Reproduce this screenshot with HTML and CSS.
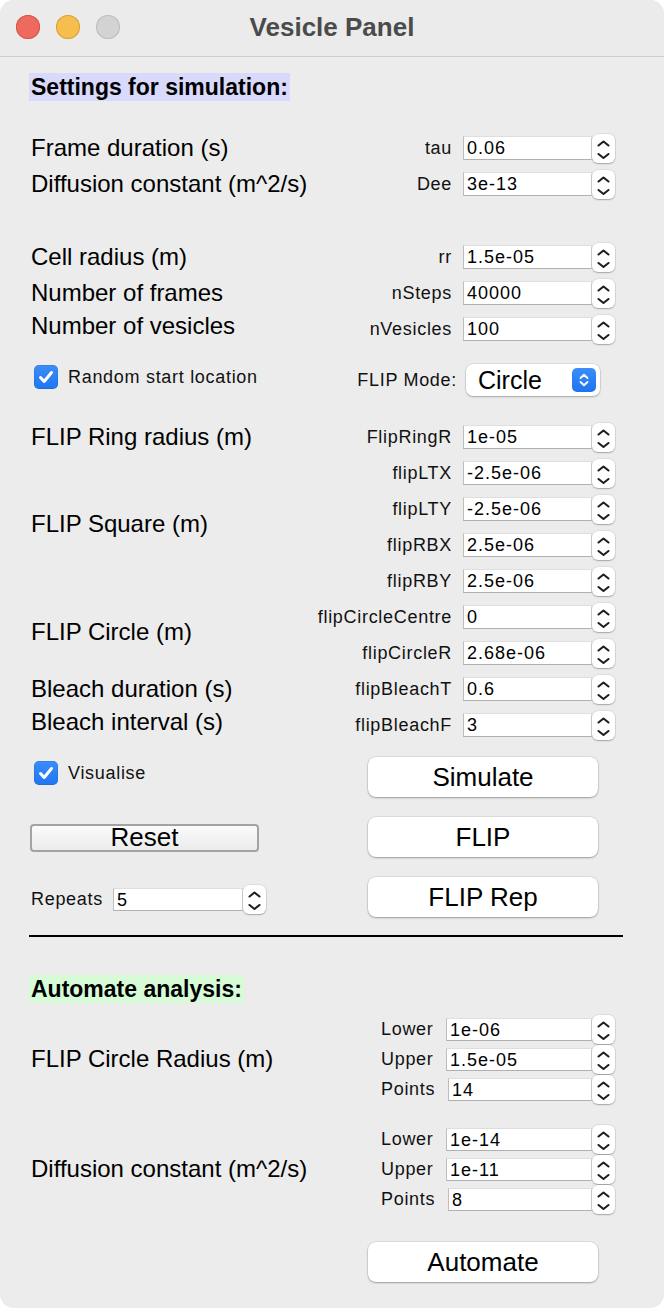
FILE: index.html
```html
<!DOCTYPE html>
<html>
<head>
<meta charset="utf-8">
<title>Vesicle Panel</title>
<link rel="stylesheet" href="styles.css">
</head>
<body>
<div class="window">
  <header class="titlebar">
    <div class="lights">
      <span class="light red"></span>
      <span class="light yellow"></span>
      <span class="light grey"></span>
    </div>
    <div class="title">Vesicle Panel</div>
    <div></div>
  </header>

  <main class="content">
    <div class="section-head sim">Settings for simulation:</div>

    <div class="form block-a">
      <div class="lbl">Frame duration (s)</div>
      <div class="rl">tau</div><div class="entry">0.06</div>
      <div class="spin"><svg width="23" height="29" viewBox="0 0 23 29"><path d="M6.5 11.5 L11.5 7.5 L16.5 11.5 M6.5 20 L11.5 24 L16.5 20"/></svg></div>
      <div class="lbl">Diffusion constant (m^2/s)</div>
      <div class="rl">Dee</div><div class="entry">3e-13</div>
      <div class="spin"><svg width="23" height="29" viewBox="0 0 23 29"><path d="M6.5 11.5 L11.5 7.5 L16.5 11.5 M6.5 20 L11.5 24 L16.5 20"/></svg></div>
    </div>

    <div class="form block-b">
      <div class="lbl">Cell radius (m)</div>
      <div class="rl">rr</div><div class="entry">1.5e-05</div>
      <div class="spin"><svg width="23" height="29" viewBox="0 0 23 29"><path d="M6.5 11.5 L11.5 7.5 L16.5 11.5 M6.5 20 L11.5 24 L16.5 20"/></svg></div>
      <div class="lbl">Number of frames</div>
      <div class="rl">nSteps</div><div class="entry">40000</div>
      <div class="spin"><svg width="23" height="29" viewBox="0 0 23 29"><path d="M6.5 11.5 L11.5 7.5 L16.5 11.5 M6.5 20 L11.5 24 L16.5 20"/></svg></div>
      <div class="lbl up">Number of vesicles</div>
      <div class="rl">nVesicles</div><div class="entry">100</div>
      <div class="spin"><svg width="23" height="29" viewBox="0 0 23 29"><path d="M6.5 11.5 L11.5 7.5 L16.5 11.5 M6.5 20 L11.5 24 L16.5 20"/></svg></div>
    </div>

    <div class="rowc">
      <label class="check">
        <span class="box"><svg width="24" height="24" viewBox="0 0 24 24"><path d="M6.5 12.5 L10.2 16.5 L17.5 7.5"/></svg></span>
        <span class="small">Random start location</span>
      </label>
      <div class="mode">
        <span class="small mode-label">FLIP Mode:</span>
        <div class="popup">
          <span class="popup-text">Circle</span>
          <span class="popup-btn"><svg width="24" height="24" viewBox="0 0 24 24"><path d="M8.5 10 L12 6.8 L15.5 10 M8.5 14 L12 17.2 L15.5 14"/></svg></span>
        </div>
      </div>
    </div>

    <div class="form block-d">
      <div class="lbl">FLIP Ring radius (m)</div>
      <div class="rl">FlipRingR</div><div class="entry">1e-05</div>
      <div class="spin"><svg width="23" height="29" viewBox="0 0 23 29"><path d="M6.5 11.5 L11.5 7.5 L16.5 11.5 M6.5 20 L11.5 24 L16.5 20"/></svg></div>

      <div class="lbl span4 up">FLIP Square (m)</div>
      <div class="rl">flipLTX</div><div class="entry">-2.5e-06</div>
      <div class="spin"><svg width="23" height="29" viewBox="0 0 23 29"><path d="M6.5 11.5 L11.5 7.5 L16.5 11.5 M6.5 20 L11.5 24 L16.5 20"/></svg></div>
      <div class="rl">flipLTY</div><div class="entry">-2.5e-06</div>
      <div class="spin"><svg width="23" height="29" viewBox="0 0 23 29"><path d="M6.5 11.5 L11.5 7.5 L16.5 11.5 M6.5 20 L11.5 24 L16.5 20"/></svg></div>
      <div class="rl">flipRBX</div><div class="entry">2.5e-06</div>
      <div class="spin"><svg width="23" height="29" viewBox="0 0 23 29"><path d="M6.5 11.5 L11.5 7.5 L16.5 11.5 M6.5 20 L11.5 24 L16.5 20"/></svg></div>
      <div class="rl">flipRBY</div><div class="entry">2.5e-06</div>
      <div class="spin"><svg width="23" height="29" viewBox="0 0 23 29"><path d="M6.5 11.5 L11.5 7.5 L16.5 11.5 M6.5 20 L11.5 24 L16.5 20"/></svg></div>

      <div class="lbl span2 up">FLIP Circle (m)</div>
      <div class="rl">flipCircleCentre</div><div class="entry">0</div>
      <div class="spin"><svg width="23" height="29" viewBox="0 0 23 29"><path d="M6.5 11.5 L11.5 7.5 L16.5 11.5 M6.5 20 L11.5 24 L16.5 20"/></svg></div>
      <div class="rl">flipCircleR</div><div class="entry">2.68e-06</div>
      <div class="spin"><svg width="23" height="29" viewBox="0 0 23 29"><path d="M6.5 11.5 L11.5 7.5 L16.5 11.5 M6.5 20 L11.5 24 L16.5 20"/></svg></div>

      <div class="lbl">Bleach duration (s)</div>
      <div class="rl">flipBleachT</div><div class="entry">0.6</div>
      <div class="spin"><svg width="23" height="29" viewBox="0 0 23 29"><path d="M6.5 11.5 L11.5 7.5 L16.5 11.5 M6.5 20 L11.5 24 L16.5 20"/></svg></div>
      <div class="lbl up">Bleach interval (s)</div>
      <div class="rl">flipBleachF</div><div class="entry">3</div>
      <div class="spin"><svg width="23" height="29" viewBox="0 0 23 29"><path d="M6.5 11.5 L11.5 7.5 L16.5 11.5 M6.5 20 L11.5 24 L16.5 20"/></svg></div>
    </div>

    <div class="bottom">
      <label class="check vis">
        <span class="box"><svg width="24" height="24" viewBox="0 0 24 24"><path d="M6.5 12.5 L10.2 16.5 L17.5 7.5"/></svg></span>
        <span class="small">Visualise</span>
      </label>
      <div class="btn">Simulate</div>
      <div class="reset-cell"><div class="btn-reset">Reset</div></div>
      <div class="btn">FLIP</div>
      <div class="repeats">
        <span class="small rep-label">Repeats</span>
        <div class="entry rep-entry">5</div>
        <div class="spin"><svg width="23" height="29" viewBox="0 0 23 29"><path d="M6.5 11.5 L11.5 7.5 L16.5 11.5 M6.5 20 L11.5 24 L16.5 20"/></svg></div>
      </div>
      <div class="btn">FLIP Rep</div>
    </div>

    <div class="separator"></div>

    <div class="section-head auto-head">Automate analysis:</div>

    <div class="auto auto-1">
      <div class="lbl span3">FLIP Circle Radius (m)</div>
      <div class="al">Lower</div><div class="entry sm">1e-06</div>
      <div class="spin"><svg width="23" height="29" viewBox="0 0 23 29"><path d="M6.5 11.5 L11.5 7.5 L16.5 11.5 M6.5 20 L11.5 24 L16.5 20"/></svg></div>
      <div class="al">Upper</div><div class="entry sm">1.5e-05</div>
      <div class="spin"><svg width="23" height="29" viewBox="0 0 23 29"><path d="M6.5 11.5 L11.5 7.5 L16.5 11.5 M6.5 20 L11.5 24 L16.5 20"/></svg></div>
      <div class="al">Points</div><div class="entry sm pts">14</div>
      <div class="spin"><svg width="23" height="29" viewBox="0 0 23 29"><path d="M6.5 11.5 L11.5 7.5 L16.5 11.5 M6.5 20 L11.5 24 L16.5 20"/></svg></div>
    </div>

    <div class="auto auto-2">
      <div class="lbl span3">Diffusion constant (m^2/s)</div>
      <div class="al">Lower</div><div class="entry sm">1e-14</div>
      <div class="spin"><svg width="23" height="29" viewBox="0 0 23 29"><path d="M6.5 11.5 L11.5 7.5 L16.5 11.5 M6.5 20 L11.5 24 L16.5 20"/></svg></div>
      <div class="al">Upper</div><div class="entry sm">1e-11</div>
      <div class="spin"><svg width="23" height="29" viewBox="0 0 23 29"><path d="M6.5 11.5 L11.5 7.5 L16.5 11.5 M6.5 20 L11.5 24 L16.5 20"/></svg></div>
      <div class="al">Points</div><div class="entry sm pts">8</div>
      <div class="spin"><svg width="23" height="29" viewBox="0 0 23 29"><path d="M6.5 11.5 L11.5 7.5 L16.5 11.5 M6.5 20 L11.5 24 L16.5 20"/></svg></div>
    </div>

    <div class="automate-row">
      <div class="btn">Automate</div>
    </div>
  </main>
</div>
</body>
</html>
```

FILE: styles.css
```css
* { box-sizing: border-box; }

html, body {
  margin: 0;
  padding: 0;
  background: #ffffff;
}

body {
  font-family: "Liberation Sans", Arial, sans-serif;
  color: #111;
}

.window {
  width: 664px;
  height: 1308px;
  background: #ececec;
  border-radius: 14px;
  overflow: hidden;
}

/* title bar */
.titlebar {
  height: 57px;
  display: grid;
  grid-template-columns: 1fr auto 1fr;
  align-items: center;
  background: #ebebeb;
  border-bottom: 1px solid #cdcdcd;
}

.lights {
  display: flex;
  gap: 16px;
  padding-left: 16px;
  padding-bottom: 2px;
}

.light {
  width: 24px;
  height: 24px;
  border-radius: 50%;
  display: block;
}

.light.red { background: #ee6a5f; box-shadow: inset 0 0 0 1px #d4564b; }
.light.yellow { background: #f5be4f; box-shadow: inset 0 0 0 1px #d9a13c; }
.light.grey { background: #d3d3d3; box-shadow: inset 0 0 0 1px #bdbdbd; }

.title {
  font-weight: bold;
  font-size: 26px;
  color: #4b4b4b;
  padding-bottom: 2px;
}

/* section headers */
.section-head {
  display: inline-block;
  font-weight: bold;
  font-size: 23px;
  height: 28px;
  line-height: 28px;
  padding: 0 2px;
  color: #000;
}

.sim {
  margin: 16px 0 0 29px;
  background: #d9d9fb;
}

.auto-head {
  margin: 38px 0 0 29px;
  background: #d6fbd6;
}

/* forms */
.form {
  display: grid;
  grid-template-columns: 1fr auto 129px 23px;
  grid-auto-rows: 36px;
  align-items: center;
  padding: 0 49px 0 31px;
}

.block-a { margin-top: 29px; }
.block-b { margin-top: 37px; }
.block-d { margin-top: 23px; }

.lbl {
  grid-column: 1;
  font-size: 24px;
  white-space: nowrap;
  color: #000;
}

.lbl.up { margin-top: -6px; }
.span2 { grid-row: span 2; }
.span3 { grid-row: span 3; }
.span4 { grid-row: span 4; }

.rl {
  grid-column: 2;
  justify-self: end;
  font-size: 18px;
  letter-spacing: 0.7px;
  margin-right: 11px;
  white-space: nowrap;
}

.entry {
  grid-column: 3;
  height: 24px;
  background: #fff;
  border: 1px solid;
  border-color: #dedede #dedede #b0b0b0 #bdbdbd;
  font-size: 18px;
  letter-spacing: 1px;
  padding-left: 3px;
  line-height: 22px;
  white-space: nowrap;
  color: #000;
}

.spin {
  grid-column: 4;
  width: 23px;
  height: 29px;
  background: #fff;
  border-radius: 6px;
  box-shadow: 0 0 0 0.5px rgba(0, 0, 0, 0.12), 0 1px 1.5px rgba(0, 0, 0, 0.25);
}

.spin svg { display: block; }
.spin path {
  fill: none;
  stroke: #1e1e1e;
  stroke-width: 2.1;
  stroke-linecap: round;
  stroke-linejoin: round;
}

.small {
  font-size: 18px;
  letter-spacing: 0.7px;
  color: #111;
}

/* checkbox row */
.rowc {
  margin-top: 17px;
  height: 32px;
  display: flex;
  justify-content: space-between;
  align-items: flex-start;
  padding: 0 64px 0 34px;
}

.check {
  display: flex;
  align-items: center;
  gap: 10px;
  margin-top: 1px;
}

.box {
  width: 24px;
  height: 24px;
  border-radius: 5px;
  background: linear-gradient(#3c8dfb, #1f76f0);
  box-shadow: inset 0 0 0 0.5px rgba(0, 0, 0, 0.15);
  display: block;
}

.box svg { display: block; }
.box path {
  fill: none;
  stroke: #fff;
  stroke-width: 3;
  stroke-linecap: round;
  stroke-linejoin: round;
}

.mode {
  display: flex;
  align-items: center;
  gap: 9px;
}

.popup {
  width: 134px;
  height: 32px;
  background: #fff;
  border-radius: 7px;
  box-shadow: 0 0 0 0.5px rgba(0, 0, 0, 0.12), 0 1px 2px rgba(0, 0, 0, 0.25);
  display: flex;
  align-items: center;
  justify-content: space-between;
  padding: 0 4px 0 12px;
}

.popup-text {
  font-size: 25px;
  color: #000;
}

.popup-btn {
  width: 24px;
  height: 24px;
  border-radius: 5px;
  background: linear-gradient(#3c8dfb, #1d74ef);
  display: block;
}

.popup-btn svg { display: block; }
.popup-btn path {
  fill: none;
  stroke: #fff;
  stroke-width: 1.9;
  stroke-linecap: round;
  stroke-linejoin: round;
}

/* bottom buttons */
.bottom {
  margin-top: 14px;
  display: grid;
  grid-template-columns: 1fr 230px;
  grid-auto-rows: 40px;
  row-gap: 20px;
  padding: 0 66px 0 30px;
}

.vis {
  align-self: start;
  margin-top: 4px;
  padding-left: 4px;
}

.btn {
  height: 40px;
  width: 230px;
  background: #fff;
  border-radius: 8px;
  box-shadow: 0 0 0 0.5px rgba(0, 0, 0, 0.12), 0 1px 2px rgba(0, 0, 0, 0.3);
  display: flex;
  align-items: center;
  justify-content: center;
  font-size: 26px;
  color: #000;
}

.reset-cell {
  display: flex;
  align-items: center;
  padding-top: 1px;
}

.btn-reset {
  width: 229px;
  height: 28px;
  border: 2px solid #a3a3a3;
  border-radius: 4px;
  background: linear-gradient(#fbfbfb, #ebebeb);
  display: flex;
  align-items: center;
  justify-content: center;
  font-size: 26px;
  color: #000;
}

.repeats {
  display: flex;
  align-items: center;
  padding-top: 5px;
  padding-left: 1px;
}

.rep-label { width: 82px; }

.rep-entry {
  width: 130px;
  height: 23px;
}

/* separator */
.separator {
  height: 2px;
  background: #000;
  margin: 18px 41px 0 29px;
}

/* automate */
.auto {
  display: grid;
  grid-template-columns: 1fr 65px 146px 23px;
  grid-auto-rows: 30px;
  align-items: center;
  padding: 0 49px 0 31px;
}

.auto-1 { margin-top: 11px; }
.auto-2 { margin-top: 20px; }

.al {
  grid-column: 2;
  font-size: 18px;
  letter-spacing: 0.7px;
  white-space: nowrap;
}

.entry.sm { height: 23px; }
.entry.pts { margin-left: 2px; }

.automate-row {
  margin-top: 28px;
  display: flex;
  justify-content: flex-end;
  padding-right: 66px;
}
```
